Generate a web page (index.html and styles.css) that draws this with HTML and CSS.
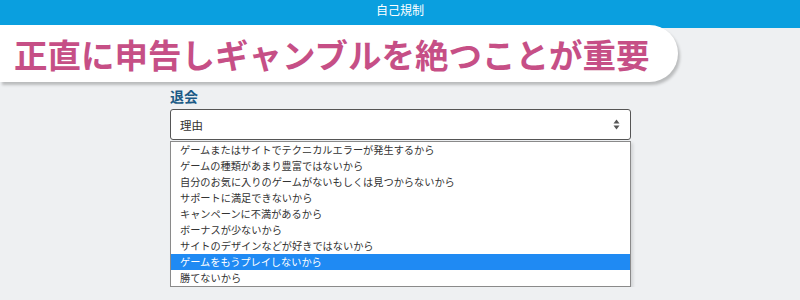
FILE: index.html
```html
<!DOCTYPE html>
<html lang="ja">
<head>
    <meta charset="UTF-8">
    <title>自己規制</title>
    <link rel="stylesheet" href="styles.css">
</head>
<body>
    <div class="topbar">自己規制</div>
    <div class="banner"><h1>正直に申告しギャンブルを絶つことが重要</h1></div>

    <div class="form">
        <label class="label">退会</label>
        <div class="select">
            <span>理由</span>
            <svg class="arrows" width="7" height="11" viewBox="0 0 7 11">
                <path d="M3.5 0.5 L6.5 4.5 L0.5 4.5 Z M3.5 10.5 L6.5 6.5 L0.5 6.5 Z" fill="#555"/>
            </svg>
        </div>
        <ul class="options">
            <li>ゲームまたはサイトでテクニカルエラーが発生するから</li>
            <li>ゲームの種類があまり豊富ではないから</li>
            <li>自分のお気に入りのゲームがないもしくは見つからないから</li>
            <li>サポートに満足できないから</li>
            <li>キャンペーンに不満があるから</li>
            <li>ボーナスが少ないから</li>
            <li>サイトのデザインなどが好きではないから</li>
            <li class="active">ゲームをもうプレイしないから</li>
            <li>勝てないから</li>
        </ul>
    </div>
</body>
</html>
```

FILE: styles.css
```css
body { margin: 0; background: #eef0f2; font-family: "Noto Sans CJK JP", "Noto Sans", sans-serif; color: #333; }
.topbar { height: 28px; background: #0a9fdf; color: #fff; font-size: 12px; line-height: 20px; text-align: center; }
.banner { width: 678px; height: 57px; margin-top: -3px; background: #fff; border-radius: 0 29px 29px 0; box-shadow: 2px 3px 3px rgba(0, 0, 0, 0.22); display: flex; align-items: center; }
.banner h1 { margin: 0 0 0 14px; font-size: 33.5px; font-weight: 700; color: #c64f86; white-space: nowrap; line-height: 1; }
.form { margin-left: 170px; width: 461px; }
.label { display: block; margin-top: 4px; margin-bottom: 3px; font-size: 14px; line-height: 20px; font-weight: 700; color: #1b5a86; }
.select { height: 29px; border: 1px solid #555; border-radius: 3px; background: #fff; display: flex; align-items: center; justify-content: space-between; padding: 0 10px 0 9px; font-size: 11.5px; }
.options { list-style: none; margin: 1px 0 0; padding: 0; background: #fff; border: 1px solid #8a8a8a; box-shadow: 2px 2px 3px rgba(0, 0, 0, 0.12); }
.options li { height: 16px; line-height: 16px; padding-left: 9px; font-size: 10.2px; color: #333; white-space: nowrap; }
.options li.active { background: #1f8af3; color: #fff; }
```
